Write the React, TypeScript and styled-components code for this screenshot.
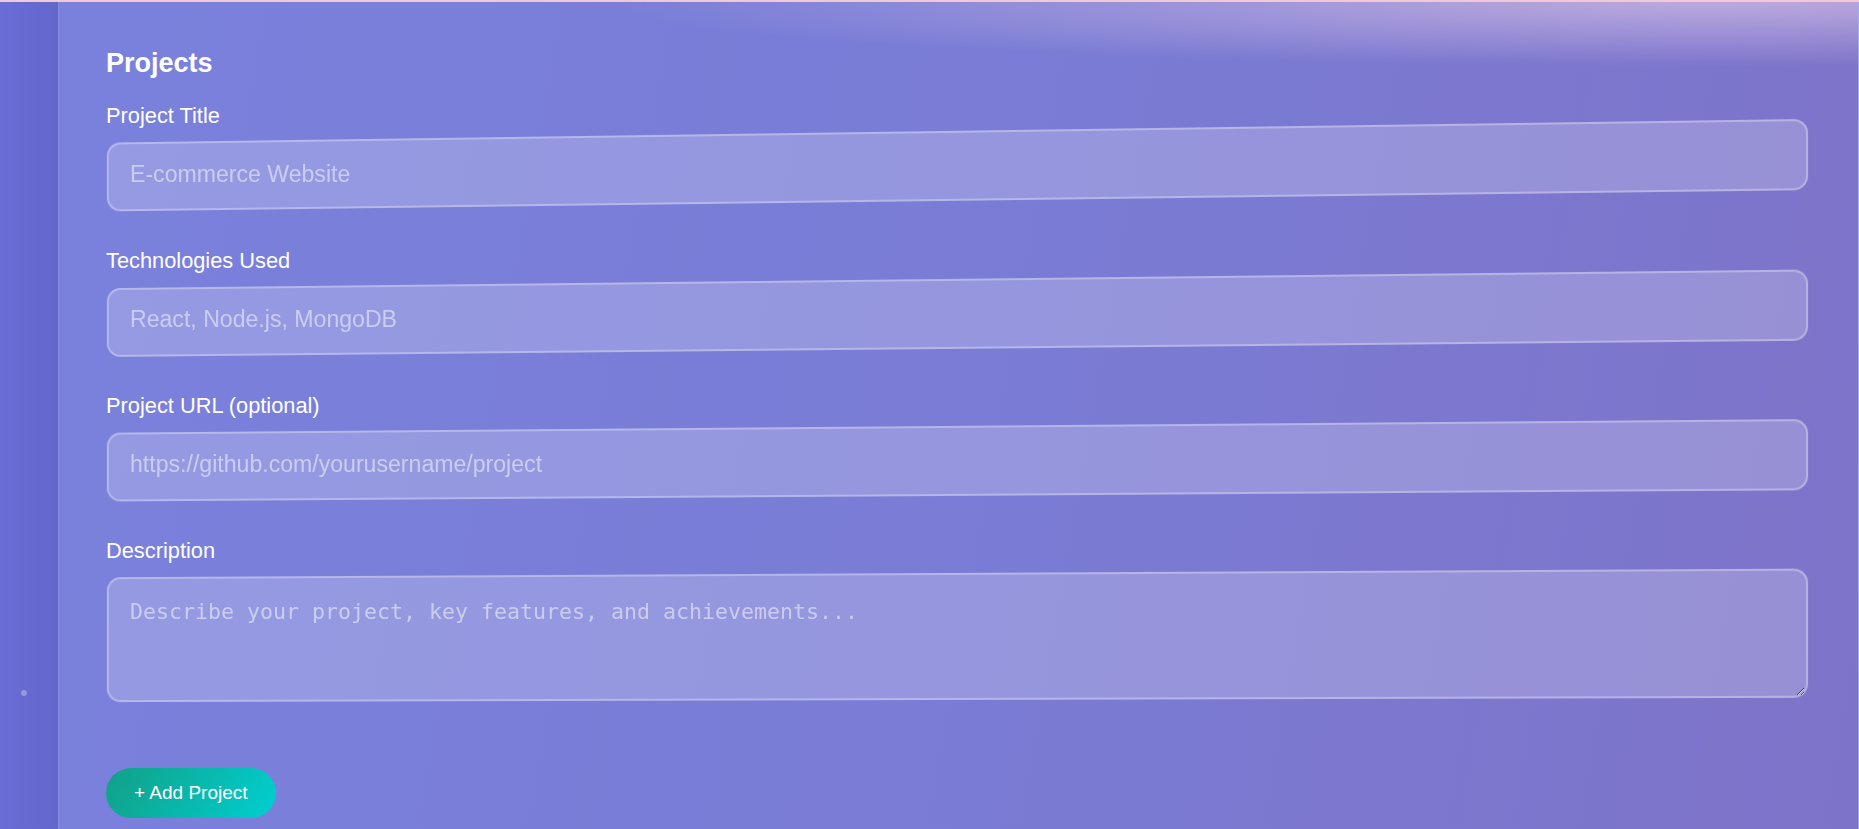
import styled, { createGlobalStyle, css } from 'styled-components';

const GlobalStyle = createGlobalStyle`
  *,
  *::before,
  *::after {
    box-sizing: border-box;
  }
  html,
  body {
    margin: 0;
    padding: 0;
    height: 100%;
    overflow: hidden;
  }
  body {
    font-family: 'Liberation Sans', Arial, sans-serif;
    background: #7a7bd4;
  }
`;

// field frames are drawn on a layer tilted in perspective around one
// vanishing point; the text itself stays flat
const HORIZON = 827;
const TILT = 0.017;

const tiltedFrame = (top: number, height: number) => {
  const layoutTop = Math.round(HORIZON - (HORIZON - top) * (1 + TILT));
  return css`
    top: ${layoutTop - top}px;
    height: ${Math.round(height * (1 + TILT))}px;
    transform-origin: 850px ${HORIZON - layoutTop}px;
  `;
};

const Page = styled.div`
  display: flex;
  height: 100vh;
  border-top: 2px solid #f1c8d4;
`;

const Sidebar = styled.aside`
  width: 59px;
  flex-shrink: 0;
  padding: 688px 0 0 21px;
  background: linear-gradient(90deg, #6a6dd5 0%, #6366cb 100%);
  border-right: 1px solid rgba(255, 255, 255, 0.22);
`;

const Dot = styled.span`
  display: block;
  width: 6px;
  height: 6px;
  border-radius: 50%;
  background: rgba(255, 255, 255, 0.3);
`;

const Main = styled.main`
  flex: 1;
  padding: 45px 50px 0 47px;
  border-right: 1px solid rgba(255, 255, 255, 0.35);
  background:
    radial-gradient(ellipse 1100px 64px at 92% 0%, rgba(240, 212, 236, 0.55), rgba(240, 212, 236, 0) 100%),
    linear-gradient(100deg, #7a81dc 0%, #7a7bd4 55%, #7e73c9 100%);
  overflow: hidden;
`;

const Title = styled.h2`
  margin: 0 0 24px;
  font-size: 27px;
  line-height: 32px;
  font-weight: 700;
  color: #fff;
`;

const Field = styled.div`
  margin-bottom: 36.5px;
`;

const Label = styled.label`
  display: block;
  margin-bottom: 14.5px;
  font-size: 21.8px;
  line-height: 25px;
  color: #fff;
`;

const Shell = styled.div<{ $top: number; $height: number }>`
  position: relative;
  height: ${(p) => p.$height}px;

  &::before {
    content: '';
    position: absolute;
    left: -14px;
    width: 1702px;
    ${(p) => tiltedFrame(p.$top, p.$height)}
    transform: perspective(2000px) rotateY(-2.29deg);
    backface-visibility: hidden;
    outline: 1px solid transparent;
    background: rgba(255, 255, 255, 0.2);
    border: 2px solid rgba(255, 255, 255, 0.3);
    border-radius: 14px;
  }
`;

const Input = styled.input`
  position: relative;
  display: block;
  width: 100%;
  height: 100%;
  padding: 0 24px 5px;
  font-family: 'Liberation Sans', Arial, sans-serif;
  font-size: 23.1px;
  color: #fff;
  background: transparent;
  border: 0;
  outline: none;

  &::placeholder {
    color: rgba(255, 255, 255, 0.5);
  }
`;

const TextArea = styled.textarea`
  position: relative;
  display: block;
  width: calc(100% - 3px);
  height: calc(100% - 7px);
  padding: 21px 24px;
  font-family: 'DejaVu Sans Mono', 'Liberation Mono', monospace;
  font-size: 21.6px;
  color: #fff;
  background: transparent;
  border: 0;
  outline: none;
  resize: vertical;

  &::placeholder {
    color: rgba(255, 255, 255, 0.5);
  }
`;

const AddButton = styled.button`
  margin-top: 28.5px;
  height: 50px;
  padding: 0 28px;
  border: 0;
  border-radius: 25px;
  background: linear-gradient(120deg, #11a086 0%, #00cfd1 100%);
  color: #fff;
  font-family: 'Liberation Sans', Arial, sans-serif;
  font-size: 19px;
  cursor: pointer;
`;

const fields = [
  { label: 'Project Title', placeholder: 'E-commerce Website', top: 142.7 },
  { label: 'Technologies Used', placeholder: 'React, Node.js, MongoDB', top: 287.7 },
  { label: 'Project URL (optional)', placeholder: 'https://github.com/yourusername/project', top: 432.7 },
];

const App: React.FC = () => {
  return (
    <>
      <GlobalStyle />
      <Page>
        <Sidebar>
          <Dot />
        </Sidebar>
        <Main>
          <Title>Projects</Title>
          {fields.map((f) => (
            <Field key={f.label}>
              <Label>{f.label}</Label>
              <Shell $top={f.top} $height={69}>
                <Input type='text' placeholder={f.placeholder} />
              </Shell>
            </Field>
          ))}
          <Field>
            <Label>Description</Label>
            <Shell $top={577.7} $height={125}>
              <TextArea placeholder='Describe your project, key features, and achievements...' />
            </Shell>
          </Field>
          <AddButton type='button'>+ Add Project</AddButton>
        </Main>
      </Page>
    </>
  );
};

export default App;
